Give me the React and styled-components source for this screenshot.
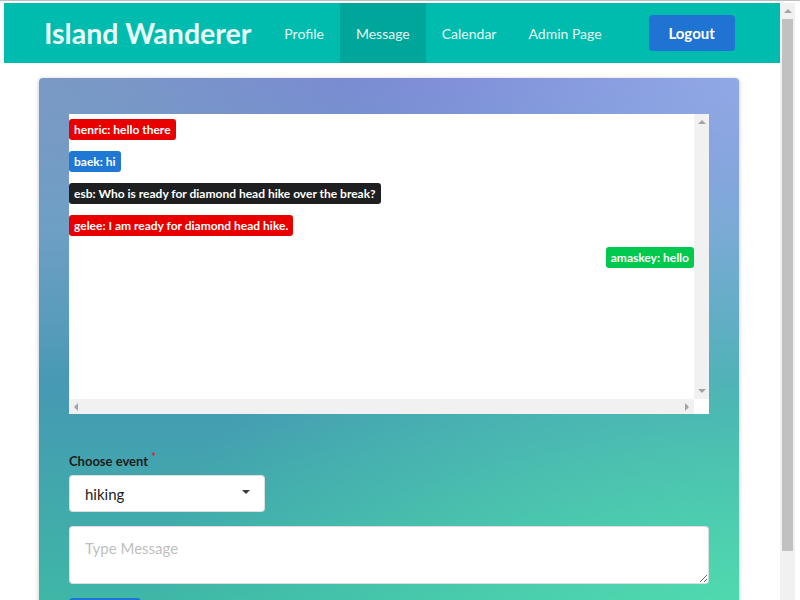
import React from "react";
import styled, { createGlobalStyle } from "styled-components";

const GlobalStyle = createGlobalStyle`
  html, body {
    margin: 0;
    height: 100%;
    overflow: hidden;
    background: #ffffff;
  }
  body {
    border-top: 1px solid #bdbdbd;
    font-family: Lato, "Open Sans", "Liberation Sans", sans-serif;
  }
`;

const messages = [
  { user: "henric", text: "hello there", color: "#e80000" },
  { user: "baek", text: "hi", color: "#1f78d4" },
  { user: "esb", text: "Who is ready for diamond head hike over the break?", color: "#1e1f20" },
  { user: "gelee", text: "I am ready for diamond head hike.", color: "#e80000" },
  { user: "amaskey", text: "hello", color: "#00c94d", mine: true },
];

const navItems = ["Profile", "Message", "Calendar", "Admin Page"];

const App = () => {
  return (
    <Frame>
      <GlobalStyle />
      <Page>
        <NavBar>
          <Brand>Island Wanderer</Brand>
          {navItems.map((item) => (
            <NavItem key={item} active={item === "Message"}>
              {item}
            </NavItem>
          ))}
          <LogoutButton>Logout</LogoutButton>
        </NavBar>

        <Card>
          <ChatBox>
            <ChatList>
              {messages.map((m, i) => (
                <Bubble key={i} color={m.color} mine={m.mine}>
                  {m.user}: {m.text}
                </Bubble>
              ))}
            </ChatList>
            <VTrack>
              <Arrow dir="up" />
              <Arrow dir="down" />
            </VTrack>
            <HTrack>
              <Arrow dir="left" />
              <Arrow dir="right" />
            </HTrack>
            <Corner />
          </ChatBox>

          <Field>
            <Label>
              Choose event<Required>*</Required>
            </Label>
            <Dropdown>
              hiking
              <Arrow dir="down" dark />
            </Dropdown>
          </Field>

          <MessageInput placeholder="Type Message" />

          <SendButton>Send</SendButton>
        </Card>
      </Page>

      <PageTrack>
        <Arrow dir="up" />
        <Thumb />
      </PageTrack>
    </Frame>
  );
};

const Frame = styled.div`
  display: flex;
  margin: 2px 5px 0 4px;
  height: 598px;
`;

const Page = styled.div`
  flex: 1;
  overflow: hidden;
`;

const PageTrack = styled.div`
  display: flex;
  flex-direction: column;
  align-items: center;
  width: 15px;
  padding-top: 6px;
  box-sizing: border-box;
  background: #f1f1f1;
`;

const Thumb = styled.div`
  width: 11px;
  height: 532px;
  margin-top: 6px;
  background: #c1c1c1;
`;

const arrowBorders = {
  up: "border-width: 0 4px 4px; border-color: transparent transparent var(--c) transparent;",
  down: "border-width: 4px 4px 0; border-color: var(--c) transparent transparent transparent;",
  left: "border-width: 4px 4px 4px 0; border-color: transparent var(--c) transparent transparent;",
  right: "border-width: 4px 0 4px 4px; border-color: transparent transparent transparent var(--c);",
};

const Arrow = styled.span`
  --c: ${(p) => (p.dark ? "#3a3a3a" : "#a3a3a3")};
  display: block;
  width: 0;
  height: 0;
  border-style: solid;
  ${(p) => arrowBorders[p.dir]}
`;

const NavBar = styled.div`
  display: flex;
  align-items: stretch;
  height: 60px;
  background: #00bcaf;
  padding-left: 40px;
`;

const Brand = styled.div`
  display: flex;
  align-items: center;
  font-size: 28.5px;
  font-weight: 700;
  color: #e9fbf8;
  margin-right: 17px;
`;

const NavItem = styled.div`
  display: flex;
  align-items: center;
  padding: 0 16px;
  font-size: 14px;
  color: #e3f7f4;
  background: ${(p) => (p.active ? "#00a699" : "transparent")};
`;

const LogoutButton = styled.button`
  align-self: center;
  margin-left: 31px;
  width: 86px;
  height: 36px;
  border: none;
  border-radius: 4px;
  background: #1f74d3;
  color: #ffffff;
  font-family: Lato, "Liberation Sans", sans-serif;
  font-size: 15px;
  font-weight: 700;
`;

const Card = styled.div`
  margin: 15px 0 0 35px;
  width: 640px;
  padding: 36px 30px 40px;
  border-radius: 4px;
  box-shadow: 0 1px 4px rgba(0, 0, 0, 0.25);
  background:
    radial-gradient(ellipse at 0% 0%, rgba(120, 170, 180, 0.55) 0%, rgba(120, 170, 180, 0) 40%),
    radial-gradient(ellipse at 100% 0%, rgba(160, 190, 240, 0.6) 0%, rgba(160, 190, 240, 0) 40%),
    radial-gradient(ellipse at 100% 100%, rgba(90, 240, 180, 0.7) 0%, rgba(90, 240, 180, 0) 60%),
    linear-gradient(to bottom, #7b87d6 0%, #6a9acb 25%, #4598b4 50%, #40b0a8 80%, #3cc2a6 100%);
`;

const ChatBox = styled.div`
  display: grid;
  grid-template-columns: 1fr 15px;
  grid-template-rows: 285px 15px;
  background: #ffffff;
`;

const ChatList = styled.div`
  display: flex;
  flex-direction: column;
  align-items: flex-start;
  gap: 11px;
  padding-top: 5px;
  overflow: hidden;
`;

const VTrack = styled.div`
  display: flex;
  flex-direction: column;
  align-items: center;
  justify-content: space-between;
  padding: 6px 0;
  background: #f1f1f1;
`;

const HTrack = styled.div`
  display: flex;
  align-items: center;
  justify-content: space-between;
  padding: 0 5px;
  background: #f1f1f1;
`;

const Corner = styled.div`
  background: #ffffff;
`;

const Bubble = styled.div`
  align-self: ${(p) => (p.mine ? "flex-end" : "flex-start")};
  background: ${(p) => p.color};
  color: #ffffff;
  font-size: 12px;
  font-weight: 700;
  line-height: 15px;
  padding: 3px 5px;
  border-radius: 3px;
  white-space: nowrap;
`;

const Field = styled.div`
  display: flex;
  flex-direction: column;
  margin-top: 39px;
`;

const Label = styled.div`
  font-size: 13px;
  font-weight: 700;
  color: #1b1c1d;
  margin-bottom: 6px;
`;

const Required = styled.span`
  color: #db2828;
  margin-left: 3px;
  position: relative;
  top: -5px;
  font-size: 12px;
`;

const Dropdown = styled.div`
  display: flex;
  align-items: center;
  justify-content: space-between;
  width: 196px;
  height: 37px;
  box-sizing: border-box;
  padding: 0 14px 0 15px;
  background: #ffffff;
  border: 1px solid rgba(34, 36, 38, 0.15);
  border-radius: 4px;
  font-size: 15px;
  color: #1b1c1d;
  & > span {
    margin-top: -3px;
  }
`;

const MessageInput = styled.textarea`
  display: block;
  width: 100%;
  height: 58px;
  margin-top: 14px;
  box-sizing: border-box;
  padding: 12px 15px;
  border: 1px solid rgba(34, 36, 38, 0.15);
  border-radius: 4px;
  font-family: Lato, "Liberation Sans", sans-serif;
  font-size: 15px;
  color: #1b1c1d;
  &::placeholder {
    color: #bfbfbf;
  }
`;

const SendButton = styled.button`
  margin-top: 14px;
  width: 72px;
  height: 36px;
  border: none;
  border-radius: 4px;
  background: #1f74d3;
  color: #ffffff;
  font-family: Lato, "Liberation Sans", sans-serif;
  font-size: 15px;
  font-weight: 700;
`;

export default App;
